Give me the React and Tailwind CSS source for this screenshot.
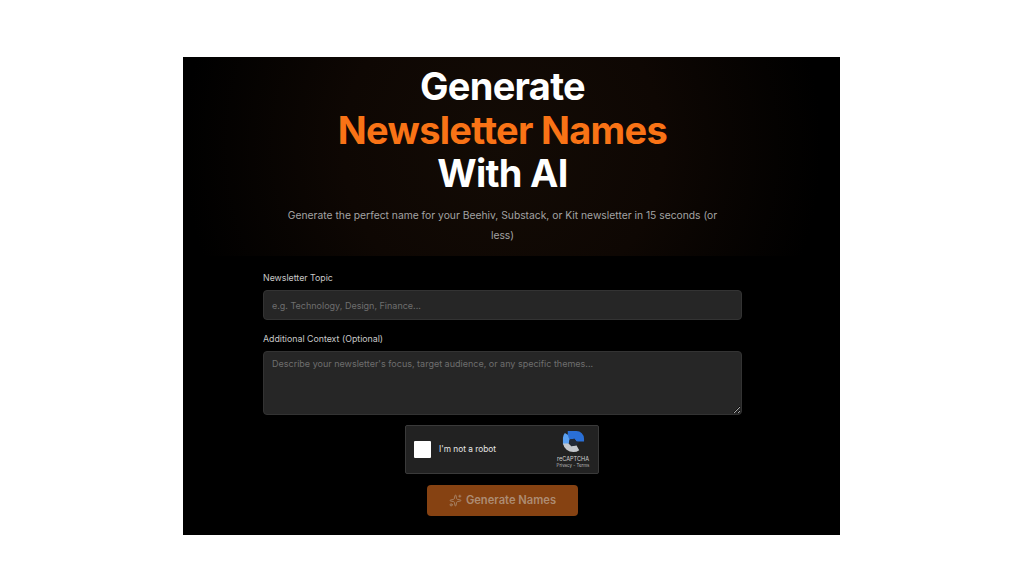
import { Sparkles } from 'lucide-react';

const RecaptchaLogo = () => (
  <svg viewBox="0 0 24 24" className="h-[23px] w-[23px]" fill="none">
    <path d="M6 1h9a8 8 0 0 1 8 8v3h-8l-2-3-5 1-2-4z" fill="#2a6fd6" />
    <path d="M3 3l3 2 2 5-1 5H1V8a8 8 0 0 1 2-5z" fill="#5aa0f2" />
    <path d="M1 14h6l3 3 5-1 3 5a11 11 0 0 1-6 2 11 11 0 0 1-11-9z" fill="#c4c7cc" />
    <path d="M8 10l5-1 2 3 3 1-3 3-5 1-3-3z" fill="#232a36" />
  </svg>
);

export default function App() {
  return (
    <div className="min-h-[576px] bg-white pt-[57px] font-['Inter',sans-serif]">
      <div className="ml-[183px] h-[478px] w-[657px] overflow-hidden bg-black">
        <div className="flex w-[639px] flex-col">
          {/* Hero */}
          <div className="flex h-[199px] flex-col items-center bg-[radial-gradient(ellipse_50%_160%_at_50%_45%,#130b05_0%,#0e0703_50%,#000000_100%)]">
            <h1 className="mt-[8px] text-center text-[38px] leading-[43.5px] font-bold tracking-[-0.7px] text-white">
              Generate
              <br />
              <span className="text-[#f97316]">Newsletter Names</span>
              <br />
              With AI
            </h1>
            <p className="mt-[9px] w-[440px] text-center text-[10.3px] leading-[20px] text-[#a3a3a3]">
              Generate the perfect name for your Beehiv, Substack, or Kit newsletter in 15 seconds (or less)
            </p>
          </div>

          {/* Form */}
          <div className="mx-auto mt-[16px] flex w-[479px] flex-col">
            <label className="text-[8.8px] leading-[12px] text-[#c8c8c8]">Newsletter Topic</label>
            <input
              type="text"
              placeholder="e.g. Technology, Design, Finance..."
              className="mt-[6px] h-[30px] w-full rounded-[4px] border border-[#333333] bg-[#262626] px-[8px] text-[9px] outline-none placeholder:text-[#6e6e6e]"
            />
            <label className="mt-[13px] text-[8.8px] leading-[12px] text-[#c8c8c8]">Additional Context (Optional)</label>
            <textarea
              placeholder="Describe your newsletter's focus, target audience, or any specific themes..."
              className="mt-[6px] h-[64px] w-full rounded-[4px] border border-[#333333] bg-[#262626] px-[8px] py-[6px] text-[9px] leading-[12px] outline-none placeholder:text-[#6e6e6e]"
            />
          </div>

          {/* Captcha */}
          <div className="mt-[10px] ml-[222px] flex h-[49px] w-[194px] items-center rounded-[2px] border border-[#3a3a3a] bg-[#222222] pr-[8px] pl-[8px]">
            <div className="h-[17px] w-[17px] rounded-[1px] bg-white" />
            <span className="ml-[8px] text-[8.3px] text-[#e5e5e5]">I'm not a robot</span>
            <div className="ml-auto flex w-[34px] flex-col items-center">
              <RecaptchaLogo />
              <span className="mt-[2px] text-[5.6px] leading-[8px] text-[#d4d4d4]">reCAPTCHA</span>
              <span className="text-[4.4px] leading-[6px] whitespace-nowrap text-[#bdbdbd]">Privacy - Terms</span>
            </div>
          </div>

          {/* Submit */}
          <button className="mx-auto mt-[11px] flex h-[31px] w-[151px] items-center justify-center gap-[4px] rounded-[4px] bg-[#864212] text-[11.2px] font-semibold text-[#ad8c72]">
            <Sparkles className="h-[13px] w-[13px]" strokeWidth={1.5} />
            Generate Names
          </button>
        </div>
      </div>
    </div>
  );
}
